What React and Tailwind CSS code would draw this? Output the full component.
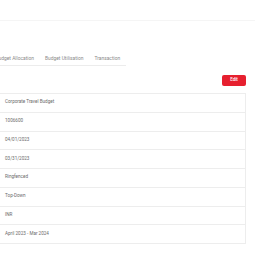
import React from 'react';

const rows = [
  'Corporate Travel Budget',
  '1006600',
  '04/01/2023',
  '03/31/2023',
  'Ringfenced',
  'Top-Down',
  'INR',
  'April 2023 - Mar 2024',
];

const tabs = ['Budget Allocation', 'Budget Utilisation', 'Transaction'];

export default function App() {
  return (
    <div className="w-[255px] h-[270px] bg-white overflow-hidden" style={{ fontFamily: 'Roboto, "Liberation Sans", sans-serif' }}>
      {/* top header strip */}
      <div className="h-[21px] border-b border-[#f5f5f5]" />

      <div className="-ml-[5px] w-[251px] pt-[32px]">
        {/* tabs */}
        <div className="-ml-[5px] flex w-fit border-b border-[#ececec] h-[13px] items-start">
          {tabs.map((t) => (
            <div key={t} className="px-[5.5px] text-[4.9px] leading-[10px] text-[#8a8a8a] whitespace-nowrap">
              {t}
            </div>
          ))}
        </div>

        {/* edit button */}
        <div className="flex justify-end mt-[9px]">
          <button className="w-[24px] h-[11px] rounded-[2px] bg-[#e6202f] text-white text-[4.5px] font-medium leading-none">
            Edit
          </button>
        </div>

        {/* details table */}
        <div className="mt-[7px] border border-[#ededed] border-b-0">
          {rows.map((r) => (
            <div key={r} className="h-[18.75px] flex items-center pl-[9px] border-b border-[#ededed] text-[4.6px] text-[#6b6b6b]">
              {r}
            </div>
          ))}
        </div>
      </div>
    </div>
  );
}
